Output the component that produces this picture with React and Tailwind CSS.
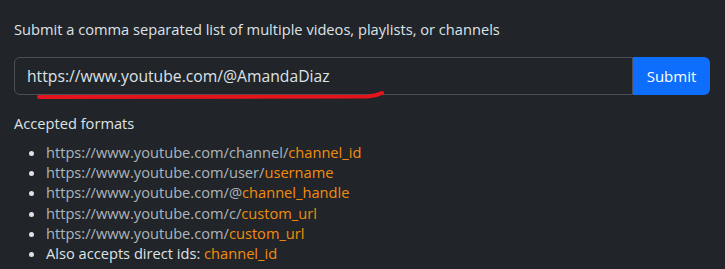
import React from 'react';

const formats = [
  { base: 'https://www.youtube.com/channel/', param: 'channel_id' },
  { base: 'https://www.youtube.com/user/', param: 'username' },
  { base: 'https://www.youtube.com/@', param: 'channel_handle' },
  { base: 'https://www.youtube.com/c/', param: 'custom_url' },
  { base: 'https://www.youtube.com/', param: 'custom_url' },
];

const App = () => {
  return (
    <div className="min-h-screen bg-[#212529] px-[14px] pt-[17px] font-['Open_Sans',sans-serif] text-[14.65px] text-[#dee2e6]">
      <p className="leading-[24px]">Submit a comma separated list of multiple videos, playlists, or channels</p>

      <div className="relative mt-[16px] flex h-[38px] w-[696px]">
        <input
          type="text"
          readOnly
          defaultValue="https://www.youtube.com/@AmandaDiaz"
          className="h-full flex-1 rounded-l-[6px] border border-[#495057] bg-[#212529] px-[12px] text-[15.7px] text-[#dee2e6] outline-none"
        />
        <button className="h-full w-[77px] rounded-r-[6px] bg-[#0d6efd] text-[15px] text-white">Submit</button>
        {/* hand drawn red underline */}
        <svg className="pointer-events-none absolute left-[22px] top-[32px]" width="350" height="12" viewBox="0 0 350 12">
          <path d="M3 8 L332 7.5 Q340 7 346 4" fill="none" stroke="#e3141c" strokeWidth="4" strokeLinecap="round" />
        </svg>
      </div>

      <p className="mt-[16px] leading-[24px]">Accepted formats</p>
      <ul className="mt-[7px] list-disc pl-[32px] leading-[20.2px]">
        {formats.map((f, i) => (
          <li key={i}>
            <span className="text-[#adb5bd]">{f.base}</span>
            <span className="text-[#f38c0c]">{f.param}</span>
          </li>
        ))}
        <li>
          Also accepts direct ids: <span className="text-[#f38c0c]">channel_id</span>
        </li>
      </ul>
    </div>
  );
};

export default App;
